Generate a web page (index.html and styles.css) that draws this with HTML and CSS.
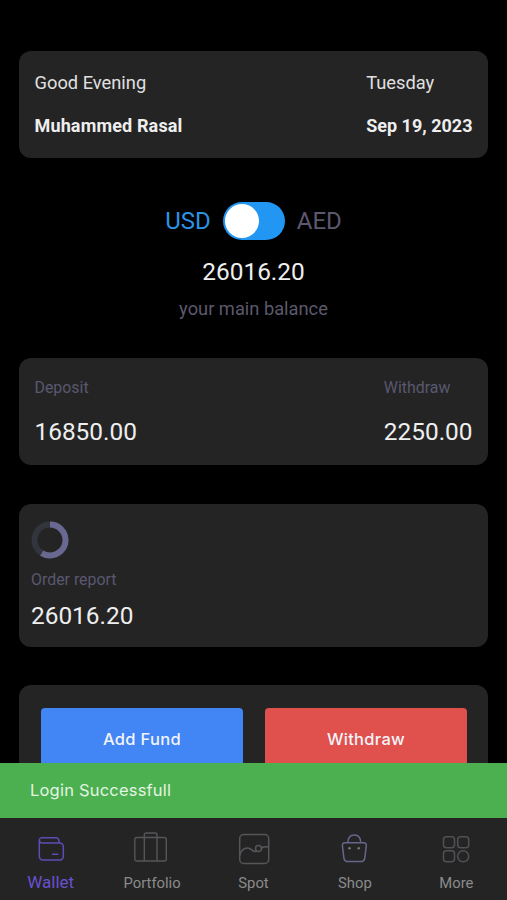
FILE: index.html
```html
<!DOCTYPE html>
<html>
	<head>
		<meta charset="utf-8">
		<title>Wallet</title>
		<link rel="stylesheet" href="styles.css">
	</head>
	<body>
		<!-- scrolling content -->
		<div id="content">
			<div class="card row-card">
				<div class="col">
					<p class="greeting">Good Evening</p>
					<p class="strong name">Muhammed Rasal</p>
				</div>
				<div class="col">
					<p class="greeting">Tuesday</p>
					<p class="strong">Sep 19, 2023</p>
				</div>
			</div>

			<!-- currency switch and balance -->
			<div class="balance">
				<div class="currency">
					<span class="usd">USD</span>
					<span class="switch"><span class="knob"></span></span>
					<span class="aed">AED</span>
				</div>
				<p class="amount">26016.20</p>
				<p class="hint">your main balance</p>
			</div>

			<div class="card row-card totals">
				<div class="col">
					<p class="label">Deposit</p>
					<p class="amount">16850.00</p>
				</div>
				<div class="col">
					<p class="label">Withdraw</p>
					<p class="amount">2250.00</p>
				</div>
			</div>

			<div class="card report">
				<svg class="ring" width="38" height="38" viewBox="0 0 38 38" fill="none" stroke-width="6">
					<circle cx="19" cy="19" r="15.5" stroke="#32353b"/>
					<circle cx="19" cy="19" r="15.5" stroke="#696891" pathLength="100" stroke-dasharray="59 41" transform="rotate(-90 19 19)"/>
				</svg>
				<p class="label">Order report</p>
				<p class="amount">26016.20</p>
			</div>

			<div class="card actions">
				<button class="btn add">Add Fund</button>
				<button class="btn withdraw">Withdraw</button>
			</div>
		</div>

		<div id="toast">Login Successfull</div>

		<!-- bottom navigation -->
		<div id="nav">
			<a class="active">
				<svg width="36" height="36" viewBox="0 0 36 36" fill="none" stroke="#5f4bb6" stroke-width="1.5" stroke-linecap="round">
					<path d="M6.300 10V26.500a3.500 3.500 0 0 0 3.500 3.500h17a3.500 3.500 0 0 0 3.500-3.500V16.500a3.500 3.500 0 0 0-3.500-3.500H9.300a3 3 0 0 1-3-3 2.500 2.500 0 0 1 3-2.200h13.700a2.900 2.900 0 0 1 2.900 2.900v2.300"/>
					<path d="M19.500 24.300h5.300"/>
				</svg>
				<span>Wallet</span>
			</a>
			<a>
				<svg width="36" height="36" viewBox="0 0 36 36" fill="none" stroke="#55565a" stroke-width="1.4">
					<rect x="0.800" y="7.500" width="31.500" height="23.500" rx="2"/>
					<path d="M10.300 31V5a2 2 0 0 1 2-2h8.700a2 2 0 0 1 2 2v26"/>
				</svg>
				<span>Portfolio</span>
			</a>
			<a>
				<svg width="36" height="36" viewBox="0 0 36 36" fill="none" stroke="#55565a" stroke-width="1.5">
					<rect x="3.700" y="4.500" width="29" height="29" rx="4"/>
					<path d="M3.700 25.500C5 20.500 8 18 11.500 18c4 0 4.500 3.800 8 3.600h1.500M25 18.500c1.700-2.300 5-2 7.700-1.400"/>
					<circle cx="22.500" cy="18.500" r="3"/>
				</svg>
				<span>Spot</span>
			</a>
			<a>
				<svg width="36" height="36" viewBox="0 0 36 36" fill="none" stroke="#66668c" stroke-width="1.5">
					<path d="M7.900 12.700h18.900a2.500 2.500 0 0 1 2.500 2.900l-1.500 12.200a4.300 4.300 0 0 1-4.300 3.800H11.200a4.300 4.300 0 0 1-4.300-3.800l-1.500-12.200a2.500 2.500 0 0 1 2.500-2.900z"/>
					<path d="M10.900 12.700c0-5 2.500-7.800 6.400-7.800s6.400 2.800 6.400 7.800"/>
					<circle cx="12.500" cy="18.300" r="1.300" fill="#77777b" stroke="none"/>
					<circle cx="21.700" cy="18.300" r="1.300" fill="#77777b" stroke="none"/>
				</svg>
				<span>Shop</span>
			</a>
			<a>
				<svg width="36" height="36" viewBox="0 0 36 36" fill="none" stroke="#505155" stroke-width="1.5">
					<rect x="5.500" y="6.700" width="11" height="11" rx="3"/>
					<rect x="19.700" y="6.700" width="11" height="11" rx="3"/>
					<rect x="5.500" y="20.800" width="11" height="11" rx="3"/>
					<circle cx="25.200" cy="26.300" r="5.500"/>
				</svg>
				<span>More</span>
			</a>
		</div>
	</body>
</html>
```

FILE: styles.css
```css
*{
	margin: 0;
	padding: 0;
	box-sizing: border-box;
}

body{
	display: flex;
	flex-direction: column;
	height: 900px;
	overflow: hidden;
	background-color: #000;
	font-family: Roboto, "Liberation Sans", sans-serif;
	color: #eee;
}

#content{
	height: 763px;
	flex: none;
	overflow: hidden;
	padding: 51px 19px 0;
}

.card{
	background-color: #242424;
	border-radius: 12px;
}

.row-card{
	display: flex;
	justify-content: space-between;
	height: 107px;
	padding: 20px 15.5px 0;
}

.greeting{
	font-size: 18.3px;
	line-height: 24px;
	color: #e0e0e0;
}

.strong{
	margin-top: 19px;
	font-size: 18px;
	line-height: 24px;
	font-weight: 700;
}

.name{
	letter-spacing: 0.15px;
}

.balance{
	height: 200px;
	padding-top: 43px;
	text-align: center;
}

/* currency switch */
.currency{
	display: flex;
	justify-content: center;
	align-items: center;
	gap: 12px;
	height: 40px;
	font-size: 24px;
}

.usd{
	color: #2c92e4;
}

.aed{
	color: #5d586f;
}

.switch{
	width: 62px;
	height: 38px;
	padding: 2px;
	border-radius: 19px;
	background-color: #2196f3;
}

.knob{
	display: block;
	width: 34px;
	height: 34px;
	border-radius: 50%;
	background-color: #fff;
}

.amount{
	font-size: 24.4px;
	line-height: 30px;
}

.balance .amount{
	margin-top: 16px;
}

.hint{
	margin-top: 10px;
	font-size: 18.3px;
	line-height: 24px;
	color: #5b596c;
}

.label{
	font-size: 15.9px;
	line-height: 20px;
	color: #59586f;
}

.totals .amount{
	margin-top: 19px;
}

.report{
	height: 143px;
	margin-top: 39px;
	padding: 17px 12px 0;
}

.ring{
	display: block;
}

.report .label{
	margin-top: 11px;
}

.report .amount{
	margin-top: 11px;
}

/* fund buttons */
.actions{
	display: flex;
	gap: 22px;
	height: 120px;
	margin-top: 38px;
	padding: 23px 21px 0 22px;
}

.btn{
	flex: 1;
	height: 61px;
	border: none;
	border-radius: 4px;
	font-family: Inter, sans-serif;
	font-size: 16.5px;
	font-weight: 500;
	letter-spacing: 0.3px;
	color: #f2f4fb;
}

.add{
	background-color: #4285f4;
}

.withdraw{
	background-color: #e0504d;
}

#toast{
	flex: none;
	height: 55px;
	padding-left: 30px;
	line-height: 55px;
	background-color: #4caf50;
	font-family: Inter, sans-serif;
	font-size: 16.5px;
	letter-spacing: 0.2px;
	color: #e2f5e2;
}

#nav{
	display: flex;
	flex: 1;
	background-color: #242424;
}

#nav a{
	flex: 1;
	display: flex;
	flex-direction: column;
	align-items: center;
	padding-top: 12px;
	font-size: 14.8px;
	color: #8b8b8b;
}

#nav span{
	margin-top: 7px;
	line-height: 20px;
}

#nav .active{
	font-size: 17px;
	color: #6a50cf;
}

#nav .active span{
	margin-top: 6px;
}
```
